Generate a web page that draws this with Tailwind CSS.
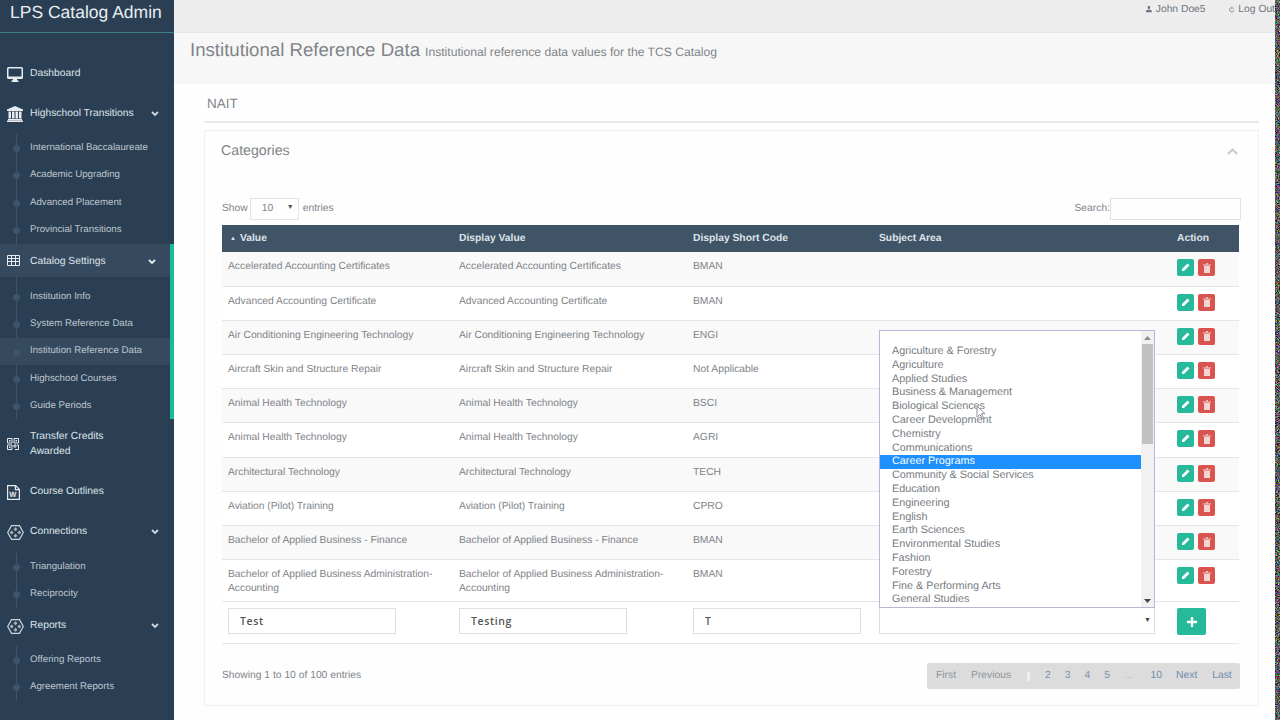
<!DOCTYPE html>
<html lang="en">
<head>
  <meta charset="UTF-8">
  <title>LPS Catalog Admin</title>
  <script src="https://cdn.jsdelivr.net/npm/@tailwindcss/browser@4"></script>
</head>
<body class="h-[720px] w-[1280px] overflow-hidden flex bg-white font-['Liberation_Sans',sans-serif] text-[#7f8489] [text-rendering:geometricPrecision]">
  <!-- Sidebar -->
  <aside class="w-[174px] h-[720px] shrink-0 bg-[#2a3f54] text-[#dfe3e8] text-[10.300px] overflow-hidden">
    <div class="h-[33px] border-b border-[#3f7f86] pl-[10px] pt-[1px] text-[17.500px] leading-[22px] text-[#e9edf1]">LPS Catalog Admin</div>

    <div class="h-[20px] mt-[31px] flex items-center">
      <svg class="ml-[7px] w-[16px] h-[15px]" viewBox="0 0 16 15" fill="#e7eaee"><path d="M1.500 0h13A1.500 1.500 0 0 1 16 1.500v9a1.500 1.500 0 0 1-1.500 1.500H10l.5 1.500h1v1.500h-7V13.500h1L6 12H1.500A1.500 1.500 0 0 1 0 10.500v-9A1.500 1.500 0 0 1 1.500 0zM1.500 1.500V9.500h13V1.500z"/></svg>
      <span class="ml-[7px]">Dashboard</span>
    </div>

    <div class="h-[20px] mt-[20px] flex items-center">
      <svg class="ml-[7px] w-[16px] h-[16px]" viewBox="0 0 16 16" fill="#e7eaee"><path d="M8 0l8 3.500V5H0V3.500zM1.500 5.500h2.500v7H1.500zM5 5.500h2.500v7H5zM8.500 5.500H11v7H8.500zM12 5.500h2.500v7H12zM1 13h14v1.200H1zM0 14.500h16V16H0z"/></svg>
      <span class="ml-[7px]">Highschool Transitions</span>
      <svg class="ml-auto mr-[15px] w-[8px] h-[6px]" viewBox="0 0 8 6" fill="none" stroke="#cfd6dd" stroke-width="1.800"><path d="M1 1l3 3 3-3"/></svg>
    </div>

    <ul class="relative mt-[10px] h-[110px] text-[9.700px] text-[#bfc6ce]">
      <li class="absolute left-[16px] top-0 bottom-0 w-px bg-[#3f5468]"></li>
      <li class="relative h-[27.300px] pl-[30px] leading-[27px]"><i class="absolute left-[13px] top-[11px] w-[7px] h-[7px] rounded-full bg-[#3f5468]"></i>International Baccalaureate</li>
      <li class="relative h-[27.300px] pl-[30px] leading-[27px]"><i class="absolute left-[13px] top-[11px] w-[7px] h-[7px] rounded-full bg-[#3f5468]"></i>Academic Upgrading</li>
      <li class="relative h-[27.300px] pl-[30px] leading-[27px]"><i class="absolute left-[13px] top-[11px] w-[7px] h-[7px] rounded-full bg-[#3f5468]"></i>Advanced Placement</li>
      <li class="relative h-[27.300px] pl-[30px] leading-[27px]"><i class="absolute left-[13px] top-[11px] w-[7px] h-[7px] rounded-full bg-[#3f5468]"></i>Provincial Transitions</li>
    </ul>

    <div class="border-r-[4px] border-[#1abb9c]">
      <div class="h-[33px] pt-[2px] flex items-center bg-[#354a5f]">
        <svg class="ml-[7px] w-[13px] h-[11px] -mt-[3px]" viewBox="0 0 13 11" fill="none" stroke="#e7eaee" stroke-width="1"><path d="M.5.5h12v10H.5zM.5 3.500h12M.5 6.500h12M4.500 .5v10M8.500.5v10"/></svg>
        <span class="ml-[10px]">Catalog Settings</span>
        <svg class="ml-auto mr-[14px] w-[8px] h-[6px]" viewBox="0 0 8 6" fill="none" stroke="#e7eaee" stroke-width="1.800"><path d="M1 1l3 3 3-3"/></svg>
      </div>
      <ul class="relative h-[142px] pt-[6px] text-[9.700px] text-[#bfc6ce]">
        <li class="absolute left-[16px] top-0 bottom-0 w-px bg-[#3f5468]"></li>
        <li class="relative h-[27.300px] pl-[30px] leading-[27px]"><i class="absolute left-[13px] top-[11px] w-[7px] h-[7px] rounded-full bg-[#3f5468]"></i>Institution Info</li>
        <li class="relative h-[27.300px] pl-[30px] leading-[27px]"><i class="absolute left-[13px] top-[11px] w-[7px] h-[7px] rounded-full bg-[#3f5468]"></i>System Reference Data</li>
        <li class="relative h-[27.300px] pl-[30px] leading-[26px] bg-[#354a5f]"><i class="absolute left-[13px] top-[11px] w-[7px] h-[7px] rounded-full bg-[#3f5468]"></i>Institution Reference Data</li>
        <li class="relative h-[27.300px] pl-[30px] leading-[27px]"><i class="absolute left-[13px] top-[11px] w-[7px] h-[7px] rounded-full bg-[#3f5468]"></i>Highschool Courses</li>
        <li class="relative h-[27.300px] pl-[30px] leading-[27px]"><i class="absolute left-[13px] top-[11px] w-[7px] h-[7px] rounded-full bg-[#3f5468]"></i>Guide Periods</li>
      </ul>
    </div>

    <div class="h-[30px] mt-[10px] flex items-center">
      <svg class="ml-[7px] w-[12px] h-[12px]" viewBox="0 0 12 12" fill="none" stroke="#e7eaee" stroke-width="1"><path d="M.5.5h4.500v4.500H.5zM7 .5h4.500v4.500H7zM.5 7H5v4.500H.5zM7 7h2v2H7zM10 7h1.500v4.500H8"/><path d="M2 2h1.500v1.500H2zM8.500 2H10v1.500H8.500zM2 8.500h1.500V10H2z" fill="#e7eaee" stroke="none"/></svg>
      <span class="ml-[11px] leading-[15px]">Transfer Credits<br>Awarded</span>
    </div>

    <div class="h-[20px] mt-[23px] flex items-center">
      <svg class="ml-[7px] w-[13px] h-[15px]" viewBox="0 0 13 15" fill="none" stroke="#e7eaee" stroke-width="1.200"><path d="M.6.6h8l3.800 3.800v10H.6zM8.400.6v4h4"/><text x="2.200" y="12" font-size="7.500" font-weight="700" fill="#e7eaee" stroke="none" font-family="Liberation Sans">W</text></svg>
      <span class="ml-[10px]">Course Outlines</span>
    </div>

    <div class="h-[20px] mt-[20px] flex items-center">
      <svg class="ml-[7px] w-[17px] h-[15px]" viewBox="0 0 17 15" fill="none" stroke="#cdd2d8" stroke-width="1.200"><path d="M4.500.6h8L16.300 7.500l-3.800 6.900h-8L.7 7.500z"/><path d="M8.500 2.200l2 2-2 2-2-2zM4.700 5.500l2 2-2 2-2-2zM12.300 5.500l2 2-2 2-2-2zM8.500 8.800l2 2-2 2-2-2z" fill="#aab3bc" stroke="none"/></svg>
      <span class="ml-[6px]">Connections</span>
      <svg class="ml-auto mr-[15px] w-[8px] h-[6px]" viewBox="0 0 8 6" fill="none" stroke="#cfd6dd" stroke-width="1.800"><path d="M1 1l3 3 3-3"/></svg>
    </div>

    <ul class="relative mt-[11px] h-[55px] text-[9.700px] text-[#bfc6ce]">
      <li class="absolute left-[16px] top-0 bottom-0 w-px bg-[#3f5468]"></li>
      <li class="relative h-[27.300px] pl-[30px] leading-[27px]"><i class="absolute left-[13px] top-[11px] w-[7px] h-[7px] rounded-full bg-[#3f5468]"></i>Triangulation</li>
      <li class="relative h-[27.300px] pl-[30px] leading-[27px]"><i class="absolute left-[13px] top-[11px] w-[7px] h-[7px] rounded-full bg-[#3f5468]"></i>Reciprocity</li>
    </ul>

    <div class="h-[20px] mt-[8px] flex items-center">
      <svg class="ml-[7px] w-[17px] h-[15px]" viewBox="0 0 17 15" fill="none" stroke="#cdd2d8" stroke-width="1.200"><path d="M4.500.6h8L16.300 7.500l-3.800 6.900h-8L.7 7.500z"/><path d="M8.500 2.200l2 2-2 2-2-2zM4.700 5.500l2 2-2 2-2-2zM12.300 5.500l2 2-2 2-2-2zM8.500 8.800l2 2-2 2-2-2z" fill="#aab3bc" stroke="none"/></svg>
      <span class="ml-[6px]">Reports</span>
      <svg class="ml-auto mr-[15px] w-[8px] h-[6px]" viewBox="0 0 8 6" fill="none" stroke="#cfd6dd" stroke-width="1.800"><path d="M1 1l3 3 3-3"/></svg>
    </div>

    <ul class="relative mt-[10px] h-[55px] text-[9.700px] text-[#bfc6ce]">
      <li class="absolute left-[16px] top-0 bottom-0 w-px bg-[#3f5468]"></li>
      <li class="relative h-[27.300px] pl-[30px] leading-[27px]"><i class="absolute left-[13px] top-[11px] w-[7px] h-[7px] rounded-full bg-[#3f5468]"></i>Offering Reports</li>
      <li class="relative h-[27.300px] pl-[30px] leading-[27px]"><i class="absolute left-[13px] top-[11px] w-[7px] h-[7px] rounded-full bg-[#3f5468]"></i>Agreement Reports</li>
    </ul>
  </aside>

  <!-- Main -->
  <div class="w-[1101px] h-[720px] shrink-0 overflow-hidden">
    <header class="h-[33px] bg-[#ededed] border-b border-[#e6e6e6] flex justify-start pl-[972px] pt-[3px] text-[10.300px] leading-[13px] text-[#70767d] whitespace-nowrap">
      <svg class="mt-[1px] w-[9px] h-[10px]" viewBox="0 0 9 10" fill="#6b7480"><path d="M2.500 2.500a2 2.500 0 1 1 4 0 2 2.500 0 0 1-4 0zM0 10V7.500L2.500 6h4L9 7.500V10z"/></svg>
      <span class="ml-[4px]">John Doe5</span>
      <svg class="ml-[23px] mt-[2px] w-[9px] h-[9px]" viewBox="0 0 9 9" fill="none" stroke="#6b7480" stroke-width="1.200"><path d="M2.500 1.500a3.700 3.700 0 1 0 4 0M4.500 0v4"/></svg>
      <span class="ml-[4px]">Log Out</span>
    </header>

    <div class="h-[51px] bg-[#f7f7f7] pl-[16px] pt-[5px] flex items-baseline">
      <h1 class="text-[18.650px] leading-[24px] text-[#7f8489]">Institutional Reference Data</h1>
      <span class="ml-[5px] text-[12.150px] text-[#7f8489]">Institutional reference data values for the TCS Catalog</span>
    </div>

    <!-- Page panel -->
    <section class="relative h-[636px] bg-[#fefefe] pl-[30px] pr-[16px]">
      <div class="h-[39px] border-b-2 border-[#e6e9ed] pl-[3px] pt-[12px] text-[13.500px] leading-[16px]">NAIT</div>

      <div class="mt-[7px] h-[576px] border border-[#eef0f2] px-[17px]">
        <div class="flex justify-between pt-[11px] h-[63px] text-[14.200px] leading-[18px]">
          <span class="-ml-px">Categories</span>
          <svg class="mr-[3px] mt-[6px] w-[11px] h-[7px]" viewBox="0 0 11 7" fill="none" stroke="#c5ccd2" stroke-width="2"><path d="M1 6l4.500-4.500L10 6"/></svg>
        </div>

        <div class="h-[31px] pb-[2px] flex items-center text-[10.300px]">
          <span>Show</span>
          <span class="ml-[2px] w-[49px] h-[22px] border border-[#e2e4e7] flex items-center justify-between pl-[11px] pr-[4px]">10 <i class="not-italic text-[7px] text-[#555]">▼</i></span>
          <span class="ml-[4px]">entries</span>
          <span class="ml-auto">Search:</span>
          <span class="w-[131px] h-[22px] border border-[#dfe1e4]"></span>
        </div>

        <div class="relative">
          <table class="w-[1017px] table-fixed border-collapse text-[10.300px] leading-[14px] [&_td]:px-[6px] [&_td]:pt-[8px] [&_td]:align-top [&_tbody_tr]:border-b [&_tbody_tr]:border-[#e3e5e8]">
            <colgroup><col class="w-[231px]"><col class="w-[234px]"><col class="w-[186px]"><col class="w-[298px]"><col class="w-[68px]"></colgroup>
            <thead>
              <tr class="h-[27px] bg-[#405467] text-[#dfe3e8] text-left font-bold">
                <th class="pl-[8px]"><span class="text-[6px] align-[1px] mr-[4px]">▲</span>Value</th>
                <th class="pl-[6px]">Display Value</th>
                <th class="pl-[6px]">Display Short Code</th>
                <th class="pl-[6px]">Subject Area</th>
                <th class="pl-[6px]">Action</th>
              </tr>
            </thead>
            <tbody>
              <tr class="h-[34.200px] bg-[#f9f9f9]"><td>Accelerated Accounting Certificates</td><td>Accelerated Accounting Certificates</td><td>BMAN</td><td></td><td><div class="flex gap-[4px] -mt-px"><button class="w-[17px] h-[17px] rounded-[2px] bg-[#26b99a] flex items-center justify-center"><svg class="w-[9px] h-[9px]" viewBox="0 0 9 9" fill="#fff"><path d="M6.500.5l2 2L3 8H1V6z"/></svg></button><button class="w-[17px] h-[17px] rounded-[2px] bg-[#d9534f] flex items-center justify-center"><svg class="w-[8px] h-[10px]" viewBox="0 0 8 10" fill="#f3d5d4"><path d="M0 1.500h8v1H0zM3 .3h2v1H3zM1 3h6v7H1z"/></svg></button></div></td></tr>
              <tr class="h-[34.200px] bg-white"><td>Advanced Accounting Certificate</td><td>Advanced Accounting Certificate</td><td>BMAN</td><td></td><td><div class="flex gap-[4px] -mt-px"><button class="w-[17px] h-[17px] rounded-[2px] bg-[#26b99a] flex items-center justify-center"><svg class="w-[9px] h-[9px]" viewBox="0 0 9 9" fill="#fff"><path d="M6.500.5l2 2L3 8H1V6z"/></svg></button><button class="w-[17px] h-[17px] rounded-[2px] bg-[#d9534f] flex items-center justify-center"><svg class="w-[8px] h-[10px]" viewBox="0 0 8 10" fill="#f3d5d4"><path d="M0 1.500h8v1H0zM3 .3h2v1H3zM1 3h6v7H1z"/></svg></button></div></td></tr>
              <tr class="h-[34.200px] bg-[#f9f9f9]"><td>Air Conditioning Engineering Technology</td><td>Air Conditioning Engineering Technology</td><td>ENGI</td><td></td><td><div class="flex gap-[4px] -mt-px"><button class="w-[17px] h-[17px] rounded-[2px] bg-[#26b99a] flex items-center justify-center"><svg class="w-[9px] h-[9px]" viewBox="0 0 9 9" fill="#fff"><path d="M6.500.5l2 2L3 8H1V6z"/></svg></button><button class="w-[17px] h-[17px] rounded-[2px] bg-[#d9534f] flex items-center justify-center"><svg class="w-[8px] h-[10px]" viewBox="0 0 8 10" fill="#f3d5d4"><path d="M0 1.500h8v1H0zM3 .3h2v1H3zM1 3h6v7H1z"/></svg></button></div></td></tr>
              <tr class="h-[34.200px] bg-white"><td>Aircraft Skin and Structure Repair</td><td>Aircraft Skin and Structure Repair</td><td>Not Applicable</td><td></td><td><div class="flex gap-[4px] -mt-px"><button class="w-[17px] h-[17px] rounded-[2px] bg-[#26b99a] flex items-center justify-center"><svg class="w-[9px] h-[9px]" viewBox="0 0 9 9" fill="#fff"><path d="M6.500.5l2 2L3 8H1V6z"/></svg></button><button class="w-[17px] h-[17px] rounded-[2px] bg-[#d9534f] flex items-center justify-center"><svg class="w-[8px] h-[10px]" viewBox="0 0 8 10" fill="#f3d5d4"><path d="M0 1.500h8v1H0zM3 .3h2v1H3zM1 3h6v7H1z"/></svg></button></div></td></tr>
              <tr class="h-[34.200px] bg-[#f9f9f9]"><td>Animal Health Technology</td><td>Animal Health Technology</td><td>BSCI</td><td></td><td><div class="flex gap-[4px] -mt-px"><button class="w-[17px] h-[17px] rounded-[2px] bg-[#26b99a] flex items-center justify-center"><svg class="w-[9px] h-[9px]" viewBox="0 0 9 9" fill="#fff"><path d="M6.500.5l2 2L3 8H1V6z"/></svg></button><button class="w-[17px] h-[17px] rounded-[2px] bg-[#d9534f] flex items-center justify-center"><svg class="w-[8px] h-[10px]" viewBox="0 0 8 10" fill="#f3d5d4"><path d="M0 1.500h8v1H0zM3 .3h2v1H3zM1 3h6v7H1z"/></svg></button></div></td></tr>
              <tr class="h-[34.200px] bg-white"><td>Animal Health Technology</td><td>Animal Health Technology</td><td>AGRI</td><td></td><td><div class="flex gap-[4px] -mt-px"><button class="w-[17px] h-[17px] rounded-[2px] bg-[#26b99a] flex items-center justify-center"><svg class="w-[9px] h-[9px]" viewBox="0 0 9 9" fill="#fff"><path d="M6.500.5l2 2L3 8H1V6z"/></svg></button><button class="w-[17px] h-[17px] rounded-[2px] bg-[#d9534f] flex items-center justify-center"><svg class="w-[8px] h-[10px]" viewBox="0 0 8 10" fill="#f3d5d4"><path d="M0 1.500h8v1H0zM3 .3h2v1H3zM1 3h6v7H1z"/></svg></button></div></td></tr>
              <tr class="h-[34.200px] bg-[#f9f9f9]"><td>Architectural Technology</td><td>Architectural Technology</td><td>TECH</td><td></td><td><div class="flex gap-[4px] -mt-px"><button class="w-[17px] h-[17px] rounded-[2px] bg-[#26b99a] flex items-center justify-center"><svg class="w-[9px] h-[9px]" viewBox="0 0 9 9" fill="#fff"><path d="M6.500.5l2 2L3 8H1V6z"/></svg></button><button class="w-[17px] h-[17px] rounded-[2px] bg-[#d9534f] flex items-center justify-center"><svg class="w-[8px] h-[10px]" viewBox="0 0 8 10" fill="#f3d5d4"><path d="M0 1.500h8v1H0zM3 .3h2v1H3zM1 3h6v7H1z"/></svg></button></div></td></tr>
              <tr class="h-[34.200px] bg-white"><td>Aviation (Pilot) Training</td><td>Aviation (Pilot) Training</td><td>CPRO</td><td></td><td><div class="flex gap-[4px] -mt-px"><button class="w-[17px] h-[17px] rounded-[2px] bg-[#26b99a] flex items-center justify-center"><svg class="w-[9px] h-[9px]" viewBox="0 0 9 9" fill="#fff"><path d="M6.500.5l2 2L3 8H1V6z"/></svg></button><button class="w-[17px] h-[17px] rounded-[2px] bg-[#d9534f] flex items-center justify-center"><svg class="w-[8px] h-[10px]" viewBox="0 0 8 10" fill="#f3d5d4"><path d="M0 1.500h8v1H0zM3 .3h2v1H3zM1 3h6v7H1z"/></svg></button></div></td></tr>
              <tr class="h-[34.200px] bg-[#f9f9f9]"><td>Bachelor of Applied Business - Finance</td><td>Bachelor of Applied Business - Finance</td><td>BMAN</td><td></td><td><div class="flex gap-[4px] -mt-px"><button class="w-[17px] h-[17px] rounded-[2px] bg-[#26b99a] flex items-center justify-center"><svg class="w-[9px] h-[9px]" viewBox="0 0 9 9" fill="#fff"><path d="M6.500.5l2 2L3 8H1V6z"/></svg></button><button class="w-[17px] h-[17px] rounded-[2px] bg-[#d9534f] flex items-center justify-center"><svg class="w-[8px] h-[10px]" viewBox="0 0 8 10" fill="#f3d5d4"><path d="M0 1.500h8v1H0zM3 .3h2v1H3zM1 3h6v7H1z"/></svg></button></div></td></tr>
              <tr class="h-[42px] bg-white"><td>Bachelor of Applied Business Administration-Accounting</td><td>Bachelor of Applied Business Administration-Accounting</td><td>BMAN</td><td></td><td><div class="flex gap-[4px] -mt-px"><button class="w-[17px] h-[17px] rounded-[2px] bg-[#26b99a] flex items-center justify-center"><svg class="w-[9px] h-[9px]" viewBox="0 0 9 9" fill="#fff"><path d="M6.500.5l2 2L3 8H1V6z"/></svg></button><button class="w-[17px] h-[17px] rounded-[2px] bg-[#d9534f] flex items-center justify-center"><svg class="w-[8px] h-[10px]" viewBox="0 0 8 10" fill="#f3d5d4"><path d="M0 1.500h8v1H0zM3 .3h2v1H3zM1 3h6v7H1z"/></svg></button></div></td></tr>
              <tr class="h-[42px] bg-white [&>td]:pt-[6px]!">
                <td><input class="w-[168px] h-[26px] border border-[#dcdfe3] px-[11px] font-['Open_Sans',sans-serif] text-[10.500px] font-semibold tracking-[0.6px] text-[#555]" value="Test"></td>
                <td><input class="w-[168px] h-[26px] border border-[#dcdfe3] px-[11px] font-['Open_Sans',sans-serif] text-[10.500px] font-semibold tracking-[0.6px] text-[#555]" value="Testing"></td>
                <td><input class="w-[168px] h-[26px] border border-[#dcdfe3] px-[11px] font-['Open_Sans',sans-serif] text-[10.500px] font-semibold tracking-[0.6px] text-[#555]" value="T"></td>
                <td><div class="w-[276px] h-[26px] border-x border-b border-[#dcdfe3] flex items-center justify-end pr-[3px] text-[7px] text-[#444]">▼</div></td>
                <td><button class="w-[29px] h-[27px] rounded-[2px] bg-[#26b99a] flex items-center justify-center"><svg class="w-[10px] h-[10px]" viewBox="0 0 10 10" fill="#fff"><path d="M3.800 0h2.400v3.800H10v2.400H6.200V10H3.800V6.200H0V3.800h3.800z"/></svg></button></td>
              </tr>
            </tbody>
          </table>

          <!-- Open multi-select dropdown lying over the table -->
          <div class="absolute left-[657px] top-[105px] w-[276px] h-[278px] bg-white border border-[#b9b6d6] text-[10.800px] leading-[13.800px] text-[#777c82] overflow-hidden">
            <ul class="pt-[14px] w-[261px]">
              <li class="pl-[12px]">Agriculture &amp; Forestry</li>
              <li class="pl-[12px]">Agriculture</li>
              <li class="pl-[12px]">Applied Studies</li>
              <li class="pl-[12px]">Business &amp; Management</li>
              <li class="pl-[12px]">Biological Sciences</li>
              <li class="pl-[12px]">Career Development</li>
              <li class="pl-[12px]">Chemistry</li>
              <li class="pl-[12px]">Communications</li>
              <li class="pl-[12px] bg-[#1e90ff] text-white">Career Programs</li>
              <li class="pl-[12px]">Community &amp; Social Services</li>
              <li class="pl-[12px]">Education</li>
              <li class="pl-[12px]">Engineering</li>
              <li class="pl-[12px]">English</li>
              <li class="pl-[12px]">Earth Sciences</li>
              <li class="pl-[12px]">Environmental Studies</li>
              <li class="pl-[12px]">Fashion</li>
              <li class="pl-[12px]">Forestry</li>
              <li class="pl-[12px]">Fine &amp; Performing Arts</li>
              <li class="pl-[12px]">General Studies</li>
            </ul>
            <div class="absolute right-0 top-0 bottom-0 w-[13px] bg-[#f1f1f1]">
              <svg class="absolute left-[3px] top-[5px] w-[7px] h-[4px]" viewBox="0 0 7 4" fill="#8a8a8a"><path d="M3.500 0L7 4H0z"/></svg>
              <div class="absolute left-[1px] right-[1px] top-[13px] h-[100px] bg-[#c1c1c1]"></div>
              <svg class="absolute left-[3px] bottom-[4px] w-[7px] h-[4px]" viewBox="0 0 7 4" fill="#444"><path d="M0 0h7L3.500 4z"/></svg>
            </div>
            <!-- mouse cursor -->
            <svg class="absolute left-[96px] top-[74px] w-[10px] h-[15px]" viewBox="0 0 10 15" fill="#fff" stroke="#6f7780" stroke-width=".8"><path d="M1 1v11l3-2.500 2 4 1.500-.8-2-4H9z"/></svg>
          </div>
        </div>

        <div class="mt-[19px] flex items-center text-[10.300px]">
          <span>Showing 1 to 10 of 100 entries</span>
          <nav class="ml-auto mr-px w-[313px] h-[26px] rounded-[2px] bg-[#dcdcdc] flex items-center pl-[9px] text-[#8f959b] whitespace-nowrap">
            <span>First</span>
            <span class="ml-[15px]">Previous</span>
            <span class="ml-[16px] w-[3px] h-[9px] bg-[#eeeeee]"></span>
            <span class="ml-[15px] text-[#7e92a8]">2</span>
            <span class="ml-[14px] text-[#7e92a8]">3</span>
            <span class="ml-[14px] text-[#7e92a8]">4</span>
            <span class="ml-[14px] text-[#7e92a8]">5</span>
            <span class="ml-[14px] text-[#b4b9bf]">...</span>
            <span class="ml-[18px] text-[#6f8cae]">10</span>
            <span class="ml-[14px] text-[#6f8cae]">Next</span>
            <span class="ml-[15px] text-[#6f8cae]">Last</span>
          </nav>
        </div>
      </div>
    </section>
  </div>

  <!-- Noise strip at the right edge of the capture -->
  <svg class="w-[5px] h-[720px] shrink-0" viewBox="0 0 5 720">
    <filter id="noise" x="0" y="0" width="100%" height="100%" color-interpolation-filters="sRGB"><feTurbulence type="fractalNoise" baseFrequency="1.100" numOctaves="2"/><feColorMatrix values="1.800 0 0 0 -.55 0 1.800 0 0 -.55 0 0 1.800 0 -.55 0 0 0 0 1"/></filter>
    <rect width="5" height="720" fill="#888" filter="url(#noise)"/>
  </svg>
</body>
</html>
